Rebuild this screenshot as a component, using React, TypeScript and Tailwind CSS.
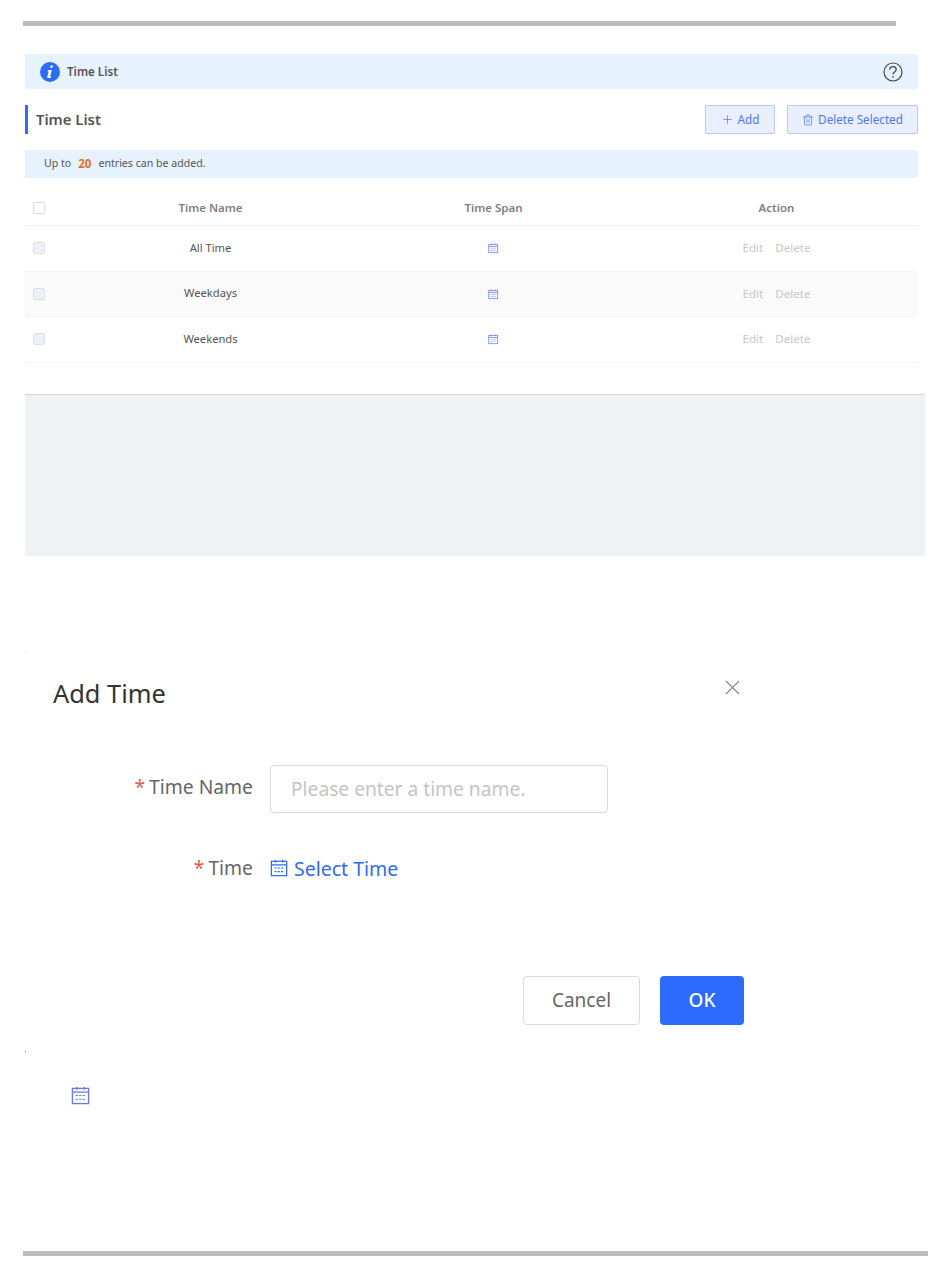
import { Plus, Trash2, X } from "lucide-react";

const rows = [
  { name: "All Time", striped: false },
  { name: "Weekdays", striped: true },
  { name: "Weekends", striped: false },
];

function CalendarIcon({ className }: { className: string }) {
  return (
    <svg viewBox="0 0 20 20" fill="none" stroke="currentColor" className={className}>
      <rect x="1.5" y="2.5" width="17" height="16" strokeWidth="1.4" />
      <path d="M1.5 6.5h17M6 1v3M14 1v3" strokeWidth="1.4" />
      <path d="M5 10h10M5 14h10" strokeWidth="1.2" strokeDasharray="2.4 1.2" />
    </svg>
  );
}

function InfoIcon() {
  return (
    <svg viewBox="0 0 20 20" className="w-[20px] h-[20px]">
      <circle cx="10" cy="10" r="10" fill="#2d6bff" />
      <path d="M10.6 3.6h2.3l-.5 2.2h-2.3zM8 8h3.8l-1.7 6.6h1.2l-.4 1.5H7l1.7-6.6H7.6z" fill="#fff" />
    </svg>
  );
}

function HelpIcon() {
  return (
    <svg viewBox="0 0 20 20" fill="none" stroke="#444" className="w-[20px] h-[20px]">
      <circle cx="10" cy="10" r="9" strokeWidth="1.2" />
      <path d="M6.8 7.6c0-1.9 1.4-3 3.2-3s3.2 1.1 3.2 2.8c0 2.4-3.2 2.6-3.2 5" strokeWidth="1.3" />
      <path d="M10 14.2v1.6" strokeWidth="1.4" />
    </svg>
  );
}

export default function App() {
  return (
    <div className="w-[950px] h-[1276px] bg-white overflow-hidden pt-[21px] pl-[25px] flex flex-col font-['Noto_Sans','Open_Sans',sans-serif]">
      <div className="-ml-[2px] w-[873px] h-[5px] bg-[#bdbdbd]" />

      {/* Main page */}
      <div className="w-[893px] mt-[28px]">
        <div className="h-[35px] flex items-center justify-between pl-[15px] pr-[15px] bg-[#e6f3fe] rounded-[2px]">
          <div className="flex items-center gap-[7px]">
            <InfoIcon />
            <span className="text-[11.6px] font-semibold text-[#555]">Time List</span>
          </div>
          <HelpIcon />
        </div>

        <div className="mt-[16px] h-[29px] flex items-center justify-between">
          <div className="h-full flex items-center border-l-[3px] border-[#2d6bff] pl-[8px]">
            <span className="text-[14.8px] font-semibold text-[#555]">Time List</span>
          </div>
          <div className="flex gap-[12px]">
            <button className="w-[70px] h-[29px] flex items-center justify-center gap-[4px] rounded-[2px] bg-[#e9effe] border border-[#b6caff] text-[11.7px] text-[#4a78f7]">
              <Plus className="w-[13px] h-[13px]" strokeWidth={1.3} />
              Add
            </button>
            <button className="w-[131px] h-[29px] flex items-center justify-center gap-[4px] rounded-[2px] bg-[#e9effe] border border-[#b6caff] text-[11.7px] text-[#4a78f7]">
              <Trash2 className="w-[12px] h-[12px]" strokeWidth={1.4} />
              Delete Selected
            </button>
          </div>
        </div>

        <div className="mt-[16px] h-[28px] flex items-center pl-[19px] bg-[#e6f3fe] rounded-[2px] text-[10.6px] text-[#555]">
          Up to
          <span className="mx-[7px] text-[11.5px] font-bold text-[#f26a1b]">20</span>
          entries can be added.
        </div>

        {/* Table */}
        <div className="mt-[12px] h-[36px] grid grid-cols-[44px_1fr_1fr_1fr] items-center border-b border-[#f0f0f0] text-[11.5px] font-semibold text-[#808080] text-center">
          <div className="pl-[8px]">
            <div className="w-[12px] h-[12px] rounded-[2px] border border-[#d9d9d9] bg-white" />
          </div>
          <div>Time Name</div>
          <div>Time Span</div>
          <div>Action</div>
        </div>
        {rows.map((row) => (
          <div
            key={row.name}
            className={`h-[45.5px] grid grid-cols-[44px_1fr_1fr_1fr] items-center border-b border-[#f4f5f9] text-[11.2px] text-[#555] text-center ${row.striped ? "bg-[#fafafa]" : "bg-white"}`}
          >
            <div className="pl-[8px]">
              <div className="w-[12px] h-[12px] rounded-[2px] border border-[#dcdfe6] bg-[#edf0f8]" />
            </div>
            <div>{row.name}</div>
            <div className="flex justify-center">
              <CalendarIcon className="w-[10.5px] h-[10.5px] text-[#5b7df8]" />
            </div>
            <div className="flex justify-center gap-[12px] -mt-[1px] text-[11.6px] text-[#c8c8c8]">
              <span>Edit</span>
              <span>Delete</span>
            </div>
          </div>
        ))}
      </div>

      {/* Empty page area */}
      <div className="w-[900px] h-[162px] mt-[31px] bg-[#f0f1f5] border-t border-[#d4d4d4]" />

      {/* Add Time dialog */}
      <div className="w-px h-px mt-[95px] bg-[#d8d8d8]" />
      <div className="w-[719px] h-[399px] pt-[23px] flex flex-col">
        <div className="flex justify-between pl-[28px]">
          <span className="text-[25.4px] leading-[36px] text-[#333]">Add Time</span>
          <X className="w-[25px] h-[25px] -mr-[1px] text-[#888]" strokeWidth={1.1} />
        </div>
        <div className="mt-[54px] flex items-center">
          <div className="w-[228px] -mt-[3px] text-right text-[19.3px] text-[#666]">
            <span className="text-[#f0524a] mr-[4px]">*</span>Time Name
          </div>
          <input
            readOnly
            placeholder="Please enter a time name."
            className="ml-[17px] w-[338px] h-[48px] px-[20px] rounded-[4px] border border-[#d9d9d9] text-[19.2px] placeholder:text-[#c4c4c4] outline-none"
          />
        </div>
        <div className="mt-[41px] flex items-center">
          <div className="w-[228px] text-right text-[19.3px] text-[#666]">
            <span className="text-[#f0524a] mr-[4px]">*</span>Time
          </div>
          <div className="ml-[17px] flex items-center gap-[6px] text-[19.5px] text-[#2d6bff]">
            <CalendarIcon className="w-[18px] h-[18px]" />
            Select Time
          </div>
        </div>
        <div className="mt-[93px] flex justify-end gap-[20px]">
          <button className="w-[117px] h-[49px] rounded-[4px] border border-[#d9d9d9] bg-white text-[19px] text-[#666]">Cancel</button>
          <button className="w-[84px] h-[49px] rounded-[4px] bg-[#2d6bff] text-[19px] font-medium text-white">OK</button>
        </div>
      </div>
      <div className="w-px h-px bg-[#999]" />

      <div className="mt-[34px] ml-[46px]">
        <CalendarIcon className="w-[19px] h-[19px] text-[#6a78f8]" />
      </div>

      <div className="-ml-[2px] mt-[146px] w-[905px] h-[5px] bg-[#bdbdbd]" />
    </div>
  );
}
